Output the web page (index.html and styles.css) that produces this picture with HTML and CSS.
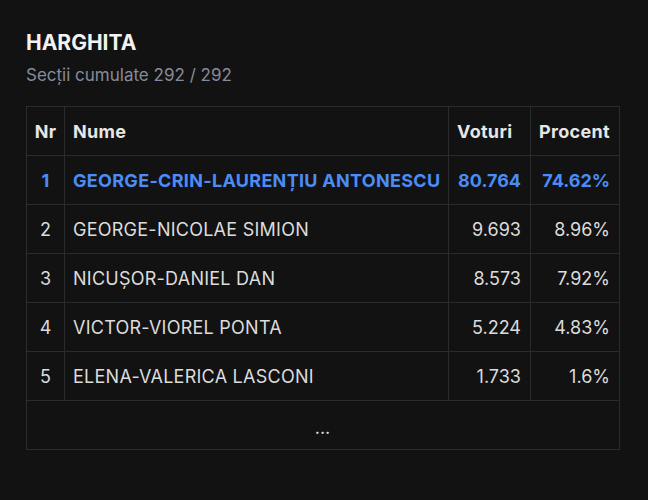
FILE: index.html
```html
<!DOCTYPE html>
<html>
<head>
<meta charset="utf-8">
<link rel="stylesheet" href="styles.css">
</head>
<body>
<div class="panel">
  <h1 class="title">HARGHITA</h1>
  <div class="subtitle">Secții cumulate 292 / 292</div>
  <table class="results">
    <colgroup>
      <col class="c-nr"><col class="c-name"><col class="c-votes"><col class="c-pct">
    </colgroup>
    <thead>
      <tr><th class="nr">Nr</th><th class="name">Nume</th><th class="head">Voturi</th><th class="head">Procent</th></tr>
    </thead>
    <tbody>
      <tr class="lead"><td class="nr">1</td><td class="name">GEORGE-CRIN-LAURENȚIU ANTONESCU</td><td class="num">80.764</td><td class="num">74.62%</td></tr>
      <tr><td class="nr">2</td><td class="name">GEORGE-NICOLAE SIMION</td><td class="num">9.693</td><td class="num">8.96%</td></tr>
      <tr><td class="nr">3</td><td class="name">NICUȘOR-DANIEL DAN</td><td class="num">8.573</td><td class="num">7.92%</td></tr>
      <tr><td class="nr">4</td><td class="name">VICTOR-VIOREL PONTA</td><td class="num">5.224</td><td class="num">4.83%</td></tr>
      <tr><td class="nr">5</td><td class="name">ELENA-VALERICA LASCONI</td><td class="num">1.733</td><td class="num">1.6%</td></tr>
      <tr><td class="more" colspan="4">...</td></tr>
    </tbody>
  </table>
</div>
</body>
</html>
```
FILE: styles.css
```css
html, body {
  margin: 0;
  background: #121212;
}
body {
  font-family: Inter, "Noto Sans", sans-serif;
  color: #e2e2e2;
}
.panel {
  padding: 30px 26px 0 26px;
}
.title {
  margin: 0;
  font-size: 21px;
  line-height: 26px;
  font-weight: 700;
  color: #f2f2f2;
}
.subtitle {
  margin-top: 8px;
  font-size: 17px;
  line-height: 22px;
  color: #878b99;
}
.results {
  margin-top: 20px;
  width: 593px;
  border-collapse: collapse;
  table-layout: fixed;
  font-size: 18px;
}
.c-nr { width: 38px; }
.c-name { width: 384px; }
.c-votes { width: 82px; }
.c-pct { width: 89px; }
.results th, .results td {
  border: 1px solid #2a2b2c;
  height: 48px;
  padding: 0 9px 0 8px;
  white-space: nowrap;
}
.results th {
  font-weight: 700;
  color: #e6e6e6;
  text-align: left;
  letter-spacing: 0.3px;
}
.results th.head { padding-left: 8px; }
.results td {
  font-weight: 400;
  color: #dcdcdc;
}
.results td.name { letter-spacing: 0.25px; }
.results .nr { text-align: center; padding: 0; }
.results .num { text-align: right; }
.lead td {
  color: #4b8cf5;
  font-weight: 700;
}
.results .lead td.name { letter-spacing: 0.3px; }
.results td.more {
  text-align: center;
  height: 49px;
  padding-top: 5px;
  box-sizing: border-box;
}
```
